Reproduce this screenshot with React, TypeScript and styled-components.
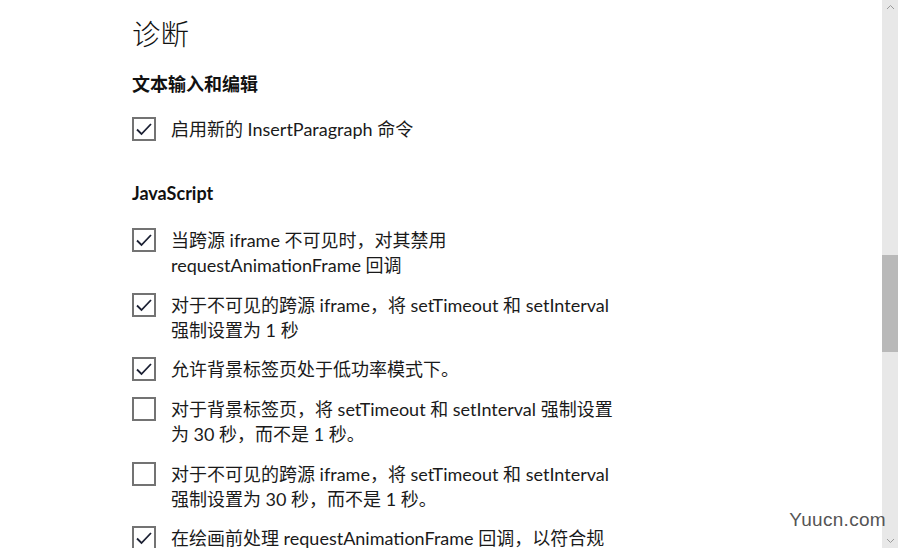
import React from "react";
import styled, { createGlobalStyle } from "styled-components";

const GlobalStyle = createGlobalStyle`
    html, body {
        margin: 0;
        padding: 0;
        background: #ffffff;
        overflow: hidden;
    }
`;

const Page = styled.div`
    display: flex;
    width: 898px;
    height: 548px;
    font-family: Lato, "Noto Sans CJK SC", sans-serif;
    color: #1a1a1a;
    position: relative;
    overflow: hidden;
`;

const Content = styled.div`
    flex: 1;
    padding: 13px 0 0 132px;
`;

const Title = styled.h1`
    margin: 0;
    font-family: "Noto Sans CJK SC", sans-serif;
    font-size: 28.5px;
    font-weight: 300;
    line-height: 40px;
    color: #111;
`;

const SectionHeading = styled.h2<{ $top: number }>`
    margin: ${(p) => p.$top}px 0 0;
    font-family: Lato, "Noto Sans CJK SC", sans-serif;
    font-size: 18px;
    font-weight: 700;
    line-height: 24px;
    color: #111;
`;

const List = styled.div<{ $top: number }>`
    display: flex;
    flex-direction: column;
    gap: 14.7px;
    margin-top: ${(p) => p.$top}px;
`;

const Row = styled.label`
    display: flex;
    align-items: flex-start;
    gap: 15px;
`;

const Box = styled.span`
    flex: none;
    box-sizing: border-box;
    width: 24px;
    height: 24px;
    border: 2px solid #737373;
    background: #fff;
    display: flex;
    align-items: center;
    justify-content: center;
`;

const Label = styled.span`
    font-family: Lato, "Noto Sans CJK SC", sans-serif;
    font-size: 18px;
    line-height: 25px;
    color: #1a1a1a;
    white-space: nowrap;
`;

const ScrollTrack = styled.div`
    width: 16px;
    background: #e8e8e8;
    display: flex;
    flex-direction: column;
    align-items: center;
    justify-content: space-between;
    padding: 4px 0;
    box-sizing: border-box;
    position: relative;
`;

const Thumb = styled.div`
    position: absolute;
    left: 0;
    top: 255px;
    width: 16px;
    height: 97px;
    background: #b9b9b9;
`;

const Watermark = styled.div`
    position: absolute;
    right: 12px;
    bottom: 17px;
    font-family: "Liberation Sans", Arial, sans-serif;
    font-size: 19px;
    color: #555;
    letter-spacing: 0.3px;
`;

const Check = () => (
    <svg width="18" height="14" viewBox="0 0 18 14">
        <path d="M2 7.5 L6.5 12 L16 2" fill="none" stroke="#1b2033" strokeWidth="1.8" />
    </svg>
);

const Chevron = ({ down }: { down?: boolean }) => (
    <svg width="9" height="6" viewBox="0 0 9 6">
        <path
            d={down ? "M1 1 L4.5 4.5 L8 1" : "M1 5 L4.5 1.5 L8 5"}
            fill="none"
            stroke="#9a9a9a"
            strokeWidth="1"
        />
    </svg>
);

const Option = ({ checked, children }: { checked: boolean; children: React.ReactNode }) => (
    <Row>
        <Box>{checked && <Check />}</Box>
        <Label>{children}</Label>
    </Row>
);

const jsOptions = [
    { checked: true, text: <>当跨源 iframe 不可见时，对其禁用<br />requestAnimationFrame 回调</> },
    { checked: true, text: <>对于不可见的跨源 iframe，将 setTimeout 和 setInterval<br />强制设置为 1 秒</> },
    { checked: true, text: <>允许背景标签页处于低功率模式下。</> },
    { checked: false, text: <>对于背景标签页，将 setTimeout 和 setInterval 强制设置<br />为 30 秒，而不是 1 秒。</> },
    { checked: false, text: <>对于不可见的跨源 iframe，将 setTimeout 和 setInterval<br />强制设置为 30 秒，而不是 1 秒。</> },
    { checked: true, text: <>在绘画前处理 requestAnimationFrame 回调，以符合规<br />范</> },
];

export default function App() {
    return (
        <>
            <GlobalStyle />
            <Page>
                <Content>
                    <Title>诊断</Title>
                    <SectionHeading $top={19}>文本输入和编辑</SectionHeading>
                    <List $top={21}>
                        <Option checked>启用新的 InsertParagraph 命令</Option>
                    </List>
                    <SectionHeading $top={39}>JavaScript</SectionHeading>
                    <List $top={23}>
                        {jsOptions.map((o, i) => (
                            <Option key={i} checked={o.checked}>
                                {o.text}
                            </Option>
                        ))}
                    </List>
                </Content>
                <ScrollTrack>
                    <Chevron />
                    <Thumb />
                    <Chevron down />
                </ScrollTrack>
                <Watermark>Yuucn.com</Watermark>
            </Page>
        </>
    );
}
